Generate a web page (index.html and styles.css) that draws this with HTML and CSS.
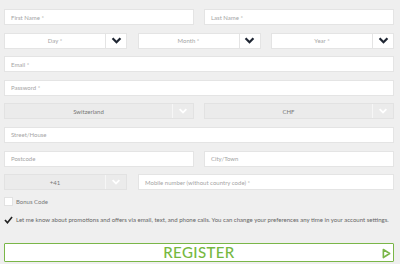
FILE: index.html
```html
<!DOCTYPE html>
<html>
<head>
<meta charset="utf-8">
<link rel="stylesheet" href="styles.css">
</head>
<body>
<form class="form">
  <div class="row two">
    <div class="field"><span class="ph">First Name *</span></div>
    <div class="field"><span class="ph">Last Name *</span></div>
  </div>
  <div class="row three">
    <div class="select"><span class="val ph">Day *</span><span class="arrow"><svg viewBox="0 0 12 8" width="11" height="7"><path d="M1.5 1.5 L6 6 L10.5 1.5" fill="none" stroke="#1f2633" stroke-width="2.6"/></svg></span></div>
    <div class="select"><span class="val ph">Month *</span><span class="arrow"><svg viewBox="0 0 12 8" width="11" height="7"><path d="M1.5 1.5 L6 6 L10.5 1.5" fill="none" stroke="#1f2633" stroke-width="2.6"/></svg></span></div>
    <div class="select"><span class="val ph">Year *</span><span class="arrow"><svg viewBox="0 0 12 8" width="11" height="7"><path d="M1.5 1.5 L6 6 L10.5 1.5" fill="none" stroke="#1f2633" stroke-width="2.6"/></svg></span></div>
  </div>
  <div class="row one">
    <div class="field"><span class="ph">Email *</span></div>
  </div>
  <div class="row one">
    <div class="field"><span class="ph">Password *</span></div>
  </div>
  <div class="row two">
    <div class="select disabled"><span class="val">Switzerland</span><span class="arrow"><svg viewBox="0 0 12 8" width="10" height="6"><path d="M1.5 1.5 L6 6 L10.5 1.5" fill="none" stroke="#fff" stroke-width="2.4"/></svg></span></div>
    <div class="select disabled"><span class="val">CHF</span><span class="arrow"><svg viewBox="0 0 12 8" width="10" height="6"><path d="M1.5 1.5 L6 6 L10.5 1.5" fill="none" stroke="#fff" stroke-width="2.4"/></svg></span></div>
  </div>
  <div class="row one">
    <div class="field"><span class="ph">Street/House</span></div>
  </div>
  <div class="row two">
    <div class="field"><span class="ph">Postcode</span></div>
    <div class="field"><span class="ph">City/Town</span></div>
  </div>
  <div class="row phone">
    <div class="select disabled"><span class="val">+41</span><span class="arrow"><svg viewBox="0 0 12 8" width="10" height="6"><path d="M1.5 1.5 L6 6 L10.5 1.5" fill="none" stroke="#fff" stroke-width="2.4"/></svg></span></div>
    <div class="field"><span class="ph">Mobile number (without country code) *</span></div>
  </div>
  <div class="check-row bonus">
    <span class="box"></span><span class="label">Bonus Code</span>
  </div>
  <div class="check-row promo">
    <svg class="tick" viewBox="0 0 10 9" width="9" height="8"><path d="M1 4.5 L3.8 7.5 L9 1" fill="none" stroke="#222" stroke-width="1.8"/></svg>
    <span class="label small">Let me know about promotions and offers via email, text, and phone calls. You can change your preferences any time in your account settings.</span>
  </div>
  <div class="register">
    <span class="reg-text">REGISTER</span>
    <svg class="play" viewBox="0 0 10 12" width="9" height="11"><path d="M1.5 1.5 L8.5 6 L1.5 10.5 Z" fill="none" stroke="#7ab648" stroke-width="1.8" stroke-linejoin="round"/></svg>
  </div>
</form>
</body>
</html>
```

FILE: styles.css
```css
html, body {
  margin: 0;
  padding: 0;
  background: #efefef;
}
body {
  width: 400px;
  height: 264px;
  overflow: hidden;
  font-family: "Lato", "DejaVu Sans", sans-serif;
}
.form {
  display: flex;
  flex-direction: column;
  padding: 9px 6px 0 4px;
  gap: 7.6px;
}
.row {
  display: grid;
  height: 16px;
}
.row.one { grid-template-columns: 1fr; }
.row.two { grid-template-columns: 1fr 1fr; column-gap: 10px; }
.row.three { grid-template-columns: 1fr 1fr 1fr; column-gap: 10.5px; }
.row.phone { grid-template-columns: 123px 1fr; column-gap: 11px; }

.field {
  background: #fff;
  border: 1px solid #e4e4e4;
  box-sizing: border-box;
  display: flex;
  align-items: center;
  padding-left: 6px;
}
.ph {
  font-size: 6px;
  color: #a5a5a5;
  white-space: nowrap;
}
.select {
  display: flex;
  box-sizing: border-box;
  background: #fff;
  border: 1px solid #e4e4e4;
}
.select .val {
  flex: 1;
  display: flex;
  align-items: center;
  justify-content: center;
  font-size: 6px;
}
.select .arrow {
  width: 20px;
  display: flex;
  align-items: center;
  justify-content: center;
  border-left: 1px solid #e4e4e4;
}
.select.disabled {
  background: #ebebeb;
  border-color: #e2e2e2;
}
.select.disabled .val {
  color: #777;
}
.select.disabled .arrow {
  border-left: 1px solid #f6f6f6;
}
.check-row {
  display: flex;
  align-items: center;
  gap: 3px;
}
.bonus {
  margin-top: -1px;
  height: 10px;
}
.box {
  width: 9px;
  height: 9px;
  background: #fff;
  border: 1px solid #e2e2e2;
  box-sizing: border-box;
}
.label {
  font-size: 6px;
  color: #777;
  white-space: nowrap;
}
.label.small {
  font-size: 6.05px;
  color: #666;
}
.promo {
  margin-top: 1px;
  height: 9px;
}
.tick {
  flex: none;
}
.register {
  margin-top: 11.5px;
  height: 19px;
  box-sizing: border-box;
  border: 1.5px solid #7ab648;
  border-radius: 1px;
  background: #fff;
  display: flex;
  align-items: center;
  justify-content: center;
  position: relative;
}
.reg-text {
  font-size: 15px;
  letter-spacing: 0.4px;
  color: #76b83f;
  font-family: "Lato", "DejaVu Sans", sans-serif;
  font-weight: 500;
  line-height: 1;
}
.play {
  position: absolute;
  right: 2px;
  top: 3.5px;
}
```
